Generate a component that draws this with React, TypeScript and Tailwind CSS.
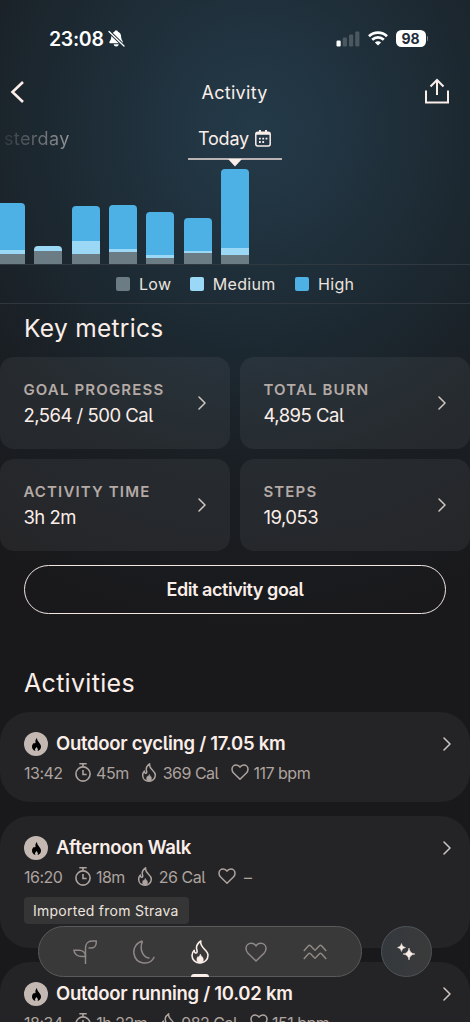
import React from "react";

type Bar = { high: number; medium: number; low: number };

const bars: Bar[] = [
  { high: 47, medium: 4, low: 10 },
  { high: 0, medium: 4.5, low: 13.5 },
  { high: 35, medium: 13, low: 10.5 },
  { high: 44.5, medium: 2.5, low: 12.5 },
  { high: 43.5, medium: 3, low: 6 },
  { high: 33, medium: 2, low: 11.5 },
  { high: 78.5, medium: 7.5, low: 9 },
];

const metrics = [
  { label: "GOAL PROGRESS", value: "2,564 / 500 Cal" },
  { label: "TOTAL BURN", value: "4,895 Cal" },
  { label: "ACTIVITY TIME", value: "3h 2m" },
  { label: "STEPS", value: "19,053" },
];

type Activity = {
  title: string;
  time: string;
  duration: string;
  burn: string;
  pulse?: string;
  source?: string;
};

const activities: Activity[] = [
  { title: "Outdoor cycling / 17.05 km", time: "13:42", duration: "45m", burn: "369 Cal", pulse: "117 bpm" },
  { title: "Afternoon Walk", time: "16:20", duration: "18m", burn: "26 Cal", source: "Imported from Strava" },
  { title: "Outdoor running / 10.02 km", time: "18:34", duration: "1h 22m", burn: "982 Cal", pulse: "151 bpm" },
];

function Chevron() {
  return (
    <svg className="shrink-0" width="8" height="14" viewBox="0 0 8 14" fill="none" stroke="#cfc6c2" strokeWidth="1.5">
      <path d="M1 1l6 6-6 6" strokeLinecap="round" strokeLinejoin="round" />
    </svg>
  );
}

function Flame({ className, strokeWidth = 1.5 }: { className: string; strokeWidth?: number }) {
  return (
    <svg className={className} viewBox="0 0 18 24" fill="none" stroke="currentColor" strokeWidth={strokeWidth} strokeLinejoin="round">
      <path d="M9.800 1C7 3 5.300 5.500 5.500 8.200C5.600 9.600 6.800 11.400 5.800 12.600C4.600 13.600 3 12.400 3.200 10.200C1.600 11.800 1 13.600 1 15.500C1 20 4.500 23 9 23S17 19.700 17 15.200C17 9.800 8.300 7.800 9.800 1Z" />
      <path d="M9.300 14C9.300 16 7.900 15.800 7.700 17.200L6.800 16.600C5.300 19 5.600 21.500 7.500 23H10.900C13 21 12.500 18.400 11.300 17C10.700 16.200 9.700 15.800 9.300 14Z" fill="currentColor" strokeWidth="0.5" />
    </svg>
  );
}

function Stopwatch() {
  return (
    <svg className="-mt-0.5 h-[19px] w-4 shrink-0" viewBox="0 0 16 19" fill="none" stroke="currentColor" strokeWidth="1.6">
      <circle cx="8" cy="11" r="7.1" />
      <path d="M4.300 0.800h7.400M8 0.800v3M8 7v4.500h3.600" />
    </svg>
  );
}

function Heart({ className, strokeWidth = 1.5 }: { className: string; strokeWidth?: number }) {
  return (
    <svg className={className} viewBox="0 0 22 20" fill="none" stroke="currentColor" strokeWidth={strokeWidth} strokeLinejoin="round">
      <path d="M11 19L3 11.200C1.600 9.800 1 8.400 1 6.500C1 3.500 3.300 1.200 6.200 1.200C8.300 1.200 10 2.200 11 4C12 2.200 13.700 1.200 15.800 1.200C18.700 1.200 21 3.500 21 6.500C21 8.400 20.400 9.800 19 11.200Z" />
    </svg>
  );
}

function FlameBadge() {
  return (
    <div className="flex size-6 shrink-0 items-center justify-center rounded-full bg-[#c4b8b3]">
      <svg width="9" height="13" viewBox="0 0 9 13" fill="#000">
        <path d="M5 0C3.400 1.500 3.200 2.800 3.500 4.300C3.700 5.500 2.600 6 2.200 4.800C0.800 5.900 0 7.200 0 8.700C0 10.900 1.500 12.600 3.500 13C2.600 11.800 2.900 10.600 4.500 9C6 10.600 6.400 11.800 5.500 13C7.600 12.600 9 10.900 9 8.700C9 5.300 5 4 5 0Z" />
      </svg>
    </div>
  );
}

function StatusBar() {
  return (
    <div className="flex h-[76px] items-center justify-between pt-px pr-[42px] pl-[49px] text-white">
      <div className="flex items-center gap-1">
        <span className="text-[19.5px] leading-6 font-semibold tracking-[-0.3px]">23:08</span>
        <svg width="17" height="18" viewBox="0 0 17 18" fill="#fff">
          <path d="M8.200 0.500C9.300 0.500 9.800 1.100 9.900 1.700C12 2.300 13 4 13.100 6.300C13.200 10 14.600 10.600 15 12.300C15.100 13 14.700 13.300 14.200 13.300H2.200C1.400 13.300 1.100 12.700 1.400 12.100C2 10.800 3.200 10 3.300 6.300C3.400 4 4.500 2.300 6.500 1.700C6.600 1.100 7.100 0.500 8.200 0.500Z" />
          <path d="M5.700 14.300h5c-.2 1.500-1.200 2.200-2.500 2.200s-2.300-.7-2.500-2.200z" />
          <path d="M1 1.500l15 14.500" stroke="#1f2f39" strokeWidth="3.2" />
          <path d="M1 1.500l15 14.500" stroke="#fff" strokeWidth="1.3" strokeLinecap="round" />
        </svg>
      </div>
      <div className="flex items-center">
        <svg width="24" height="16" viewBox="0 0 24 16">
          <rect x="0.500" y="9.500" width="4.200" height="6" rx="1.2" fill="#fff" />
          <rect x="6.700" y="6.500" width="4.200" height="9" rx="1.2" fill="#4b5860" />
          <rect x="13" y="3.500" width="4.200" height="12" rx="1.2" fill="#4b5860" />
          <rect x="19.200" y="0.500" width="4.200" height="15" rx="1.2" fill="#4b5860" />
        </svg>
        <svg className="ml-2" width="20" height="15" viewBox="0 0 20 15" fill="none" stroke="#fff" strokeWidth="2.7">
          <path d="M1 5.200C6 .4 14 .4 19 5.200" />
          <path d="M4.200 8.700C7.500 5.500 12.500 5.500 15.800 8.700" />
          <path d="M10 14.500L6.900 11.400C8.600 9.700 11.400 9.700 13.100 11.400Z" fill="#fff" stroke="none" />
        </svg>
        <div className="ml-2 flex h-[17px] w-[30px] items-center justify-center rounded-[5.5px] bg-white text-[14px] leading-none font-bold text-[#1f2d38]">
          98
        </div>
        <div className="ml-px h-[5px] w-[1.5px] rounded-r bg-[#7b868c]" />
      </div>
    </div>
  );
}

function ActivityChart() {
  return (
    <div className="-ml-[3px] flex h-[98px] items-end gap-[9.35px] border-b border-[#303940]">
      {bars.map((bar, i) => (
        <div key={i} className="flex w-7 shrink-0 flex-col overflow-hidden rounded-t-[4px]">
          <div className="bg-[#4eb1e6]" style={{ height: bar.high }} />
          <div className="bg-[#9bd8f5]" style={{ height: bar.medium }} />
          <div className="bg-[#6b7c84]" style={{ height: bar.low }} />
        </div>
      ))}
    </div>
  );
}

function ActivityCard({ activity }: { activity: Activity }) {
  return (
    <div className="rounded-[30px] bg-[#242426] pt-5 pr-[19px] pb-[17px] pl-6">
      <div className="flex h-6 items-center">
        <FlameBadge />
        <span className="ml-2 flex-1 text-[18.5px] font-semibold tracking-[-0.28px] whitespace-nowrap">{activity.title}</span>
        <Chevron />
      </div>
      <div className="mt-[5px] flex h-6 items-center text-[16px] tracking-[-0.5px] whitespace-nowrap text-[#ada39f]">
        <span>{activity.time}</span>
        <span className="ml-[12.5px] flex items-center gap-[5px]">
          <Stopwatch />
          {activity.duration}
        </span>
        <span className="ml-[12.5px] flex items-center gap-[5.5px]">
          <Flame className="-mt-0.5 h-[19px] w-4 shrink-0" strokeWidth={1.9} />
          {activity.burn}
        </span>
        <span className="ml-[13px] flex items-center gap-[4px]">
          <Heart className="-mt-0.5 h-4 w-[18px] shrink-0" strokeWidth={1.9} />
          {activity.pulse ?? <span className="ml-1">–</span>}
        </span>
      </div>
      {activity.source && (
        <div className="mt-2 mb-[7px] flex h-[27px] w-[165px] items-center rounded-[4px] bg-[#353535] pl-[9px] text-[14px] tracking-[0.25px] text-[#ece3df]">
          {activity.source}
        </div>
      )}
    </div>
  );
}

function TabBar() {
  return (
    <div className="absolute bottom-[45px] left-[38px] flex gap-[19px]">
      <div className="flex h-[51px] w-[324px] items-center justify-between rounded-full border border-[#5a5a5a] bg-[#393939] px-[34px] text-[#8f8885]">
        <svg width="24" height="24" viewBox="0 0 24 24" fill="none" stroke="currentColor" strokeWidth="1.5">
          <path d="M12.500 24V8C12.500 4 15 1 19 1H23.200V3C23.200 6 20.800 8 18 8H15.500" />
          <path d="M12.500 16.500H9C4.500 16.500 1 14 1 10.200H6C9.500 10.200 12.500 12.500 12.500 16.500" />
        </svg>
        <svg width="22" height="24" viewBox="0 0 22 24" fill="none" stroke="currentColor" strokeWidth="1.5">
          <path d="M9.500 1C3.500 2.500 0 8 1 14C3 24.500 17 26.500 21.300 16.800M9.500 1C5.500 11.500 11.500 18 16.500 18" />
        </svg>
        <div className="relative">
          <Flame className="h-6 w-[18px] text-[#fbeee9]" strokeWidth={1.6} />
          <div className="absolute -bottom-[13px] left-0 h-[3px] w-[18px] rounded-t-[3px] bg-[#fbeee9]" />
        </div>
        <Heart className="h-5 w-[22px]" />
        <svg width="24" height="16" viewBox="0 0 24 16" fill="none" stroke="currentColor" strokeWidth="1.5" strokeLinejoin="round">
          <path d="M0.800 7L5.500 1.700Q6.500 0.700 7.500 1.700L11.200 5.600Q12 6.400 12.800 5.600L16.500 1.700Q17.500 0.700 18.500 1.700L23.200 7" />
          <path d="M0.800 15L5.500 9.700Q6.500 8.700 7.500 9.700L11.200 13.600Q12 14.400 12.800 13.600L16.500 9.700Q17.500 8.700 18.500 9.700L23.200 15" />
        </svg>
      </div>
      <div className="flex size-[51px] items-center justify-center rounded-full border border-[#50555a] bg-linear-to-r from-[#34393d] to-[#3a3a3a]">
        <svg className="-ml-0.5" width="18" height="18" viewBox="0 0 18 18" fill="#fbeee9">
          <path d="M4.500 0.500Q5 4 8.500 4.500Q5 5 4.500 8.500Q4 5 0.500 4.500Q4 4 4.500 0.500Z" stroke="#fbeee9" strokeWidth="0.5" />
          <path d="M12 5Q12.600 10.400 18 11Q12.600 11.600 12 17Q11.400 11.600 6 11Q11.400 10.400 12 5Z" stroke="#fbeee9" strokeWidth="0.5" />
        </svg>
      </div>
    </div>
  );
}

export default function App() {
  return (
    <div className="relative h-[1022px] w-[470px] overflow-hidden bg-[#19191b] bg-[radial-gradient(ellipse_480px_500px_at_255px_130px,#243a49_0%,#20323e_22%,#1c2830_45%,#1a1f24_67%,#19191b_100%)] font-['Inter',sans-serif] text-[#fbeee9] [font-feature-settings:'cv05']">
      <StatusBar />
      <header className="flex h-8 items-center justify-between pr-[21px] pl-[10px]">
        <svg width="26" height="24" viewBox="0 0 26 24" fill="none" stroke="#fbeee9" strokeWidth="2.6">
          <path d="M13 2L2.500 12l10.500 10" />
        </svg>
        <h1 className="ml-[8px] text-[18px] tracking-[0.3px]">Activity</h1>
        <svg className="-mt-[2px]" width="24" height="26" viewBox="0 0 24 26" fill="none" stroke="#fbeee9" strokeWidth="2">
          <path d="M1 12.500v12h22v-12M12 17V2M5.500 8.500L12 2l6.500 6.500" />
        </svg>
      </header>

      <div className="flex h-[52px] justify-between pl-1">
        <span className="mt-[19px] bg-linear-to-r from-[#fbeee9]/10 to-[#fbeee9]/55 bg-clip-text text-[18px] leading-6 tracking-[0.35px] text-transparent">
          sterday
        </span>
        <div className="mr-[188px] flex w-[94px] flex-col border-b-2 border-[#b9b3b3] pl-[10px]">
          <div className="mt-[19px] flex items-center gap-[6px] text-[18px] leading-6 tracking-[-0.2px]">
            Today
            <svg className="-mt-0.5" width="16" height="17" viewBox="0 0 16 17" fill="none" stroke="#fbeee9" strokeWidth="1.5">
              <rect x="0.800" y="2.300" width="14.400" height="13.700" rx="2" />
              <path d="M1 3.800h14M5 0v3M11 0v3" strokeWidth="2" />
              <path d="M4 8.700h9M4 12h5.500" strokeWidth="1.8" strokeDasharray="1.8 1.5" />
            </svg>
          </div>
        </div>
      </div>

      <div className="relative pt-[7px]">
        <svg className="absolute -top-px left-[228px]" width="14" height="8" viewBox="0 0 14 8">
          <path d="M0 0h14L7 7.500z" fill="#fbeee9" />
        </svg>
        <ActivityChart />
      </div>

      <div className="flex h-[39px] items-center border-b border-[#30373e] pl-[116px] text-[16px] tracking-[0.3px] text-[#ece3df]">
        <div className="mr-[9px] size-[14px] rounded-[2px] bg-[#6b7c84]" />
        Low
        <div className="mr-[9px] ml-[18.5px] size-[14px] rounded-[2px] bg-[#9bd8f5]" />
        Medium
        <div className="mr-[9px] ml-[19.5px] size-[14px] rounded-[2px] bg-[#4eb1e6]" />
        High
      </div>

      <h2 className="mt-[8px] ml-6 text-[24.5px] leading-8 tracking-[0.3px]">Key metrics</h2>
      <div className="mt-[13px] grid grid-cols-2 gap-[10px]">
        {metrics.map((m) => (
          <div key={m.label} className="flex h-[92px] items-center justify-between rounded-[14px] bg-white/[0.055] pr-6 pl-[23.4px]">
            <div className="-mt-0.5">
              <p className="text-[15px] leading-[26px] font-semibold tracking-[1.15px] text-[#b5aaa6]">{m.label}</p>
              <p className="-mt-px text-[18.5px] leading-[26px] tracking-[-0.5px]">{m.value}</p>
            </div>
            <Chevron />
          </div>
        ))}
      </div>

      <button className="mt-[14px] ml-6 flex h-[49px] w-[422px] items-center justify-center rounded-full border-[1.5px] border-[#f1e6e2] text-[18px] font-semibold tracking-[-0.45px]">
        Edit activity goal
      </button>

      <h2 className="mt-[53px] ml-6 text-[25px] leading-8 tracking-[0.3px]">Activities</h2>
      <div className="mt-[13px] flex flex-col gap-[14px]">
        {activities.map((a) => (
          <ActivityCard key={a.title} activity={a} />
        ))}
      </div>
      <TabBar />
    </div>
  );
}
